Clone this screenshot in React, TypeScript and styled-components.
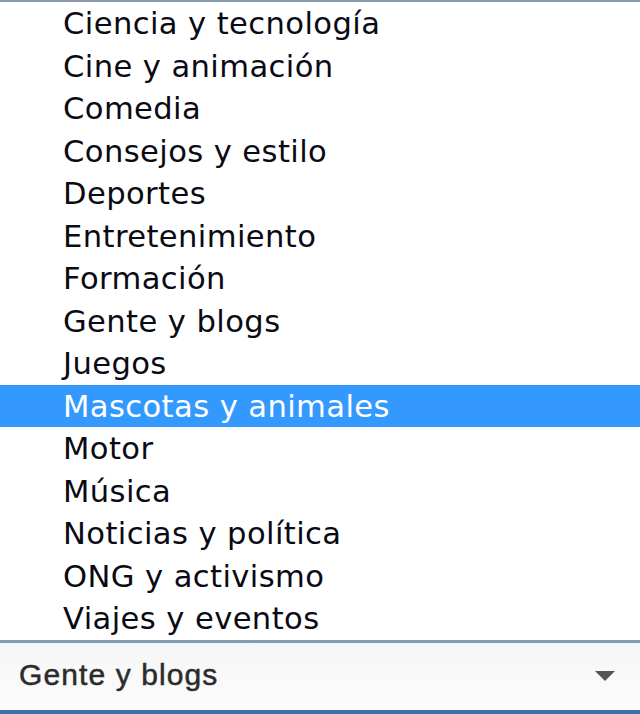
import React from "react";
import styled, { createGlobalStyle } from "styled-components";

const GlobalStyle = createGlobalStyle`
  html, body {
    margin: 0;
    padding: 0;
    background: #ffffff;
  }
`;

const Page = styled.div`
  width: 640px;
  height: 714px;
  display: flex;
  flex-direction: column;
  overflow: hidden;
`;

const List = styled.ul`
  margin: 0;
  padding: 0;
  list-style: none;
  border-top: 2.5px solid #8d9bb1;
  background: #ffffff;
  display: flex;
  flex-direction: column;
`;

const Option = styled.li<{ $selected?: boolean }>`
  height: 42.5px;
  line-height: 44.5px;
  padding-left: 63px;
  font-family: "DejaVu Sans", Verdana, sans-serif;
  font-size: 30.6px;
  letter-spacing: 0.4px;
  white-space: nowrap;
  overflow: hidden;
  color: ${({ $selected }) => ($selected ? "#ffffff" : "#0a0a14")};
  background: ${({ $selected }) => ($selected ? "#3399ff" : "transparent")};
`;

const Select = styled.div`
  flex: 1;
  display: flex;
  align-items: center;
  justify-content: space-between;
  padding: 0 24px 0 19px;
  border-top: 3px solid #7f9bb8;
  border-bottom: 4px solid #3e6fa9;
  background: linear-gradient(#f6f6f6, #fcfcfc);
`;

const Value = styled.span`
  font-family: "Liberation Sans", Arial, sans-serif;
  font-size: 30px;
  letter-spacing: 1.1px;
  color: #2b2b2b;
  -webkit-text-stroke: 0.5px #2b2b2b;
  padding-bottom: 2px;
`;

const Arrow = () => (
  <svg width="22" height="12" viewBox="0 0 22 12">
    <path d="M1 1 L21 1 L11 11 Z" fill="#555555" />
  </svg>
);

const categories = [
  "Ciencia y tecnología",
  "Cine y animación",
  "Comedia",
  "Consejos y estilo",
  "Deportes",
  "Entretenimiento",
  "Formación",
  "Gente y blogs",
  "Juegos",
  "Mascotas y animales",
  "Motor",
  "Música",
  "Noticias y política",
  "ONG y activismo",
  "Viajes y eventos",
];

export default function App() {
  const highlighted = "Mascotas y animales";
  return (
    <>
      <GlobalStyle />
      <Page>
        <List>
          {categories.map((c) => (
            <Option key={c} $selected={c === highlighted}>
              {c}
            </Option>
          ))}
        </List>
        <Select>
          <Value>Gente y blogs</Value>
          <Arrow />
        </Select>
      </Page>
    </>
  );
}
